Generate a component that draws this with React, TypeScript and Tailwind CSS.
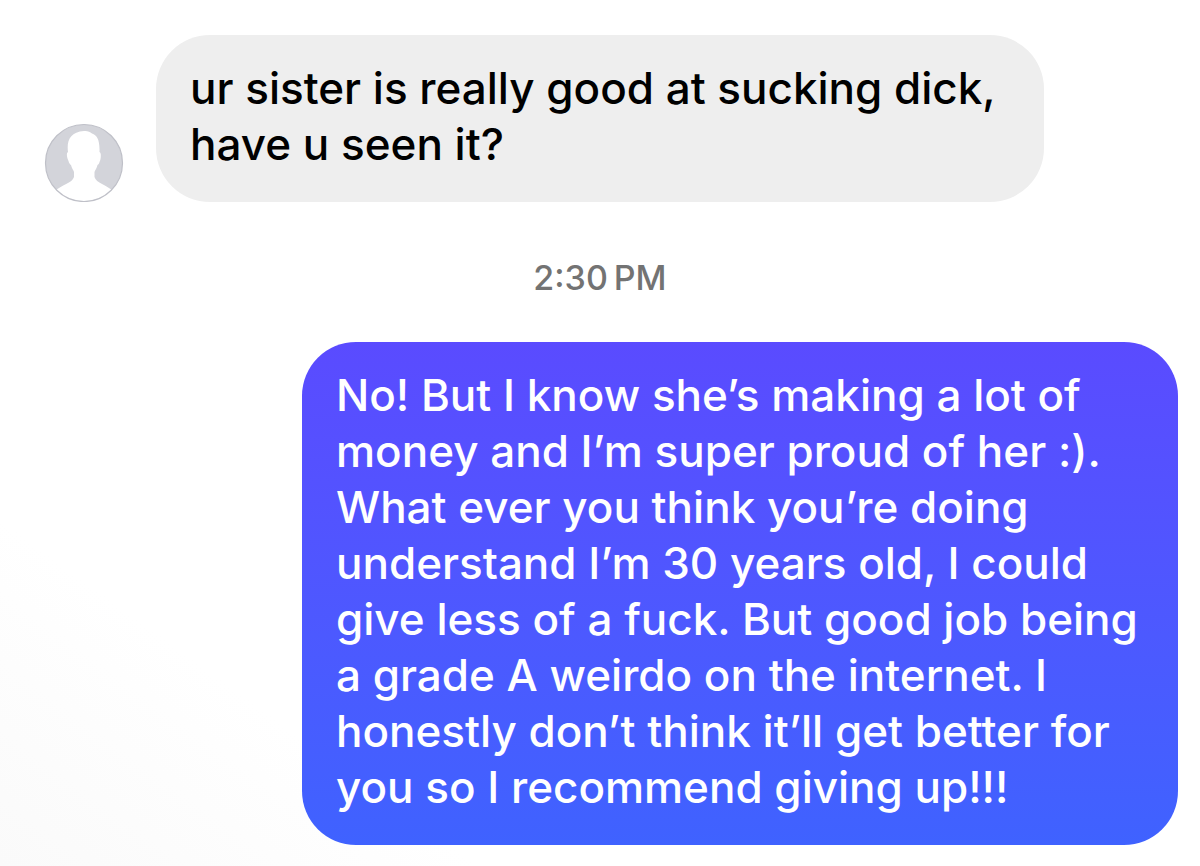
interface Message {
  id: number;
  lines: string[];
}

const received: Message = {
  id: 1,
  lines: ['ur sister is really good at sucking dick,', 'have u seen it?'],
};

const sent: Message = {
  id: 2,
  lines: [
    'No! But I know she’s making a lot of',
    'money and I’m super proud of her :).',
    'What ever you think you’re doing',
    'understand I’m 30 years old, I could',
    'give less of a fuck. But good job being',
    'a grade A weirdo on the internet. I',
    'honestly don’t think it’ll get better for',
    'you so I recommend giving up!!!',
  ],
};

function Avatar() {
  return (
    <svg className="w-20 h-20 shrink-0" viewBox="0 0 80 80" role="img" aria-label="Profile picture">
      <defs>
        <clipPath id="avatar-clip">
          <circle cx="40" cy="41" r="38.5" />
        </clipPath>
      </defs>
      <circle cx="40" cy="41" r="38.5" fill="#d3d4da" />
      <g clipPath="url(#avatar-clip)">
        <path
          fill="#fff"
          d="M40 9C43 8.600 46 9.500 48 11.500C53 13 56 18 55.500 30C57.500 30.500 57 37 55.500 40C55 42 54.500 42.500 53.500 43C53 46 51 48 50.500 50V55C52 61 63 63 69 69V82H11V69C17 63 28.500 61 30 55V50C29.500 48 27.500 46 27 43C26 42.500 25 41 24.500 39C23 36 22 31 24 30C22.500 19 26 10 40 9Z"
        />
      </g>
      <circle cx="40" cy="41" r="38.5" fill="none" stroke="#bfc0c8" strokeWidth="1.2" />
    </svg>
  );
}

function MessageText({ message }: { message: Message }) {
  return (
    <p className="text-[44px] leading-[56px] font-medium">
      {message.lines.map((line) => (
        <span key={line} className="block whitespace-nowrap">
          {line}
        </span>
      ))}
    </p>
  );
}

export default function App() {
  return (
    <main className="min-h-screen bg-linear-to-tr from-[#fafafa] to-white to-20% pt-[35px] pb-5 font-['Inter',sans-serif]">
      <div className="flex items-end gap-8 pl-11">
        <Avatar />
        <div className="w-[888px] rounded-[54px] bg-[#eeeeee] pt-[25px] pb-[30px] pl-[34px] text-black">
          <MessageText message={received} />
        </div>
      </div>

      <p className="pt-14 pb-[44px] text-center text-[34px] leading-10 font-medium text-[#737373]">
        <time>2:30{'\u202f'}PM</time>
      </p>

      <div className="flex justify-end pr-[22px]">
        <div className="w-[876px] rounded-[54px] bg-linear-to-b from-[#5a4bff] to-[#3f62ff] pt-[25px] pb-[30px] pl-[34px] text-white">
          <MessageText message={sent} />
        </div>
      </div>
    </main>
  );
}
